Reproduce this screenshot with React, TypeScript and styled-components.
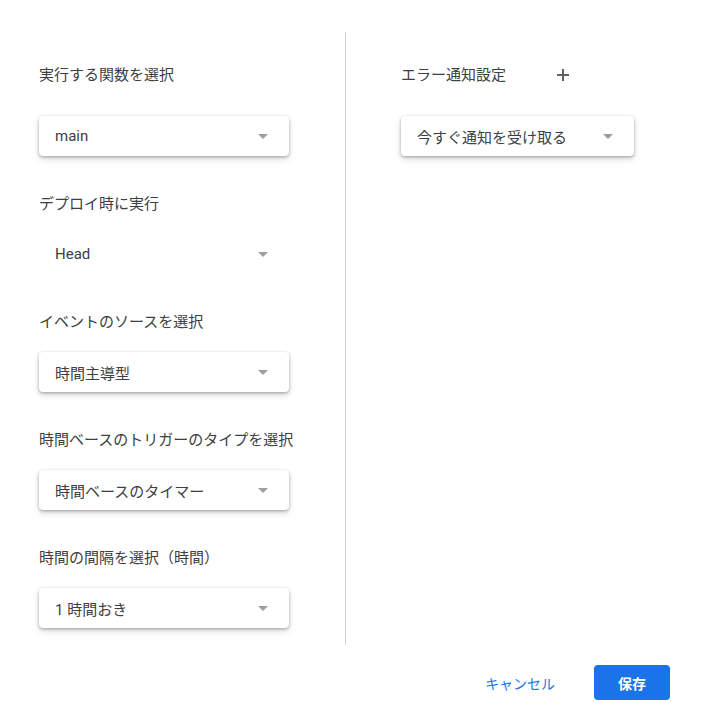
import React from 'react';
import styled, { createGlobalStyle } from 'styled-components';

const GlobalStyle = createGlobalStyle`
    html, body {
        margin: 0;
        padding: 0;
        background: #ffffff;
    }
    body {
        font-family: Roboto, "Noto Sans CJK JP", "Noto Sans", sans-serif;
        color: #3c4043;
    }
`;

const Page = styled.div`
    width: 710px;
    height: 726px;
    display: flex;
    flex-direction: column;
`;

const Body = styled.div`
    display: flex;
    padding-top: 32px;
    height: 613px;
`;

const LeftColumn = styled.div`
    box-sizing: border-box;
    width: 346px;
    padding: 33px 0 0 39px;
    border-right: 1px solid #cfcfcf;
    display: flex;
    flex-direction: column;
    gap: 38px;
`;

const RightColumn = styled.div`
    padding: 33px 0 0 55px;
    display: flex;
    flex-direction: column;
`;

const Field = styled.div`
    display: flex;
    flex-direction: column;
`;

const LabelRow = styled.div<{ $first?: boolean }>`
    display: flex;
    align-items: center;
    height: 20px;
    margin-bottom: ${p => (p.$first ? 31 : 20)}px;
`;

const Label = styled.span`
    font-size: 15px;
    line-height: 20px;
    color: #3c4043;
`;

const AddButton = styled.span`
    display: flex;
    width: 12px;
    height: 12px;
    margin-left: 51px;
    color: #5f6368;

    svg {
        width: 12px;
        height: 12px;
    }
`;

const Select = styled.div<{ $width: number; $flat?: boolean }>`
    box-sizing: border-box;
    width: ${p => p.$width}px;
    height: 40px;
    padding: 0 21px 0 16px;
    display: flex;
    align-items: center;
    justify-content: space-between;
    background: #ffffff;
    border-radius: 4px;
    box-shadow: ${p =>
        p.$flat ? 'none' : '0 1px 3px rgba(0, 0, 0, 0.28), 0 3px 6px rgba(0, 0, 0, 0.16)'};
`;

const SelectValue = styled.span`
    font-size: 15px;
    color: #3c4043;
    white-space: nowrap;
`;

const Arrow = styled.span`
    width: 0;
    height: 0;
    border-left: 5px solid transparent;
    border-right: 5px solid transparent;
    border-top: 5px solid #9e9e9e;
`;

const Footer = styled.div`
    display: flex;
    justify-content: flex-end;
    align-items: center;
    gap: 23px;
    padding: 20px 40px 0 0;
`;

const TextButton = styled.button`
    height: 35px;
    padding: 0 16px;
    border: none;
    background: transparent;
    color: #1a73e8;
    font-family: Roboto, "Noto Sans CJK JP", sans-serif;
    font-size: 14px;
    cursor: pointer;
`;

const PrimaryButton = styled.button`
    width: 76px;
    height: 35px;
    border: none;
    border-radius: 4px;
    background: #1a73e8;
    color: #ffffff;
    font-family: Roboto, "Noto Sans CJK JP", sans-serif;
    font-size: 14px;
    font-weight: 700;
    cursor: pointer;
`;

const PlusIcon = () => (
    <svg viewBox="0 0 12 12" fill="none" stroke="currentColor" strokeWidth="2">
        <path d="M6 0v12M0 6h12" />
    </svg>
);

interface DropdownProps {
    value: string;
    width?: number;
    flat?: boolean;
}

const Dropdown: React.FC<DropdownProps> = ({ value, width = 250, flat }) => (
    <Select $width={width} $flat={flat}>
        <SelectValue>{value}</SelectValue>
        <Arrow />
    </Select>
);

const fields = [
    { label: '実行する関数を選択', value: 'main' },
    { label: 'デプロイ時に実行', value: 'Head', flat: true },
    { label: 'イベントのソースを選択', value: '時間主導型' },
    { label: '時間ベースのトリガーのタイプを選択', value: '時間ベースのタイマー' },
    { label: '時間の間隔を選択（時間）', value: '1 時間おき' },
];

export default function App() {
    return (
        <Page>
            <GlobalStyle />
            <Body>
                <LeftColumn>
                    {fields.map((f, i) => (
                        <Field key={f.label}>
                            <LabelRow $first={i === 0}>
                                <Label>{f.label}</Label>
                            </LabelRow>
                            <Dropdown value={f.value} flat={f.flat} />
                        </Field>
                    ))}
                </LeftColumn>
                <RightColumn>
                    <Field>
                        <LabelRow $first>
                            <Label>エラー通知設定</Label>
                            <AddButton>
                                <PlusIcon />
                            </AddButton>
                        </LabelRow>
                        <Dropdown value="今すぐ通知を受け取る" width={233} />
                    </Field>
                </RightColumn>
            </Body>
            <Footer>
                <TextButton>キャンセル</TextButton>
                <PrimaryButton>保存</PrimaryButton>
            </Footer>
        </Page>
    );
}
